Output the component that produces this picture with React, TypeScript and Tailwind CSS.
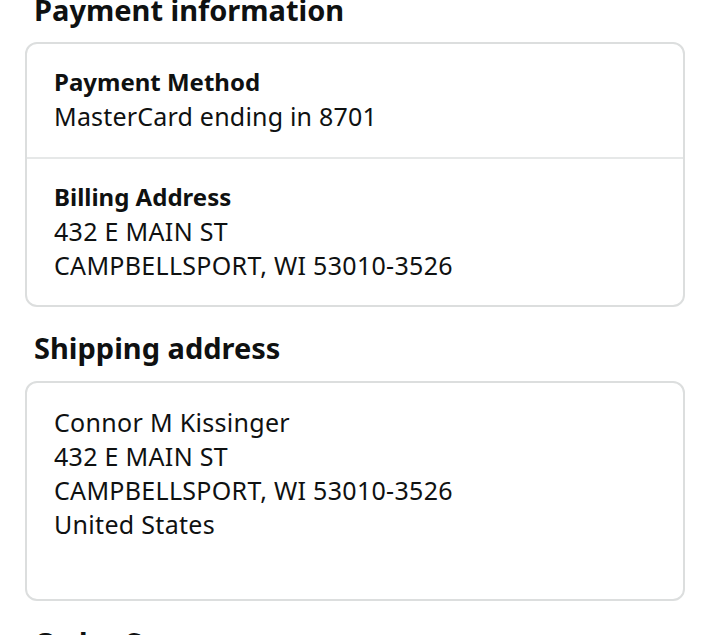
import React from 'react';

const font = { fontFamily: '"Noto Sans", "Open Sans", Arial, sans-serif' };

const Heading = ({ children }: { children: React.ReactNode }) => (
  <h2 className="pl-[9px] text-[29px] leading-[34px] font-bold text-[#0f1111]">{children}</h2>
);

export default function App() {
  return (
    <div className="w-[710px] h-[635px] overflow-hidden bg-white text-[#0f1111]" style={font}>
      <div className="px-[25px] -mt-[7px] flex flex-col">
        <Heading>Payment information</Heading>

        <div className="mt-[15px] rounded-[12px] border-2 border-[#dcdede]">
          <div className="px-[27px] pt-[21px] pb-[24px] border-b-2 border-[#e6e8e8] text-[25px] leading-[34px] tracking-[0.2px]">
            <div className="font-bold text-[24px] tracking-normal">Payment Method</div>
            <div>MasterCard ending in 8701</div>
          </div>
          <div className="px-[27px] pt-[21px] pb-[23px] text-[25px] leading-[34px] tracking-[0.3px]">
            <div className="font-bold text-[24px] tracking-normal">Billing Address</div>
            <div>432 E MAIN ST</div>
            <div>CAMPBELLSPORT, WI 53010-3526</div>
          </div>
        </div>

        <div className="mt-[24px]">
          <Heading>Shipping address</Heading>
        </div>

        <div className="mt-[16px] rounded-[12px] border-2 border-[#dcdede] px-[27px] pt-[22px] pb-[58px] text-[25px] leading-[34px] tracking-[0.3px]">
          <div>Connor M Kissinger</div>
          <div>432 E MAIN ST</div>
          <div>CAMPBELLSPORT, WI 53010-3526</div>
          <div>United States</div>
        </div>

        <div className="mt-[25px]">
          <Heading>Order Summary</Heading>
        </div>
      </div>
    </div>
  );
}
